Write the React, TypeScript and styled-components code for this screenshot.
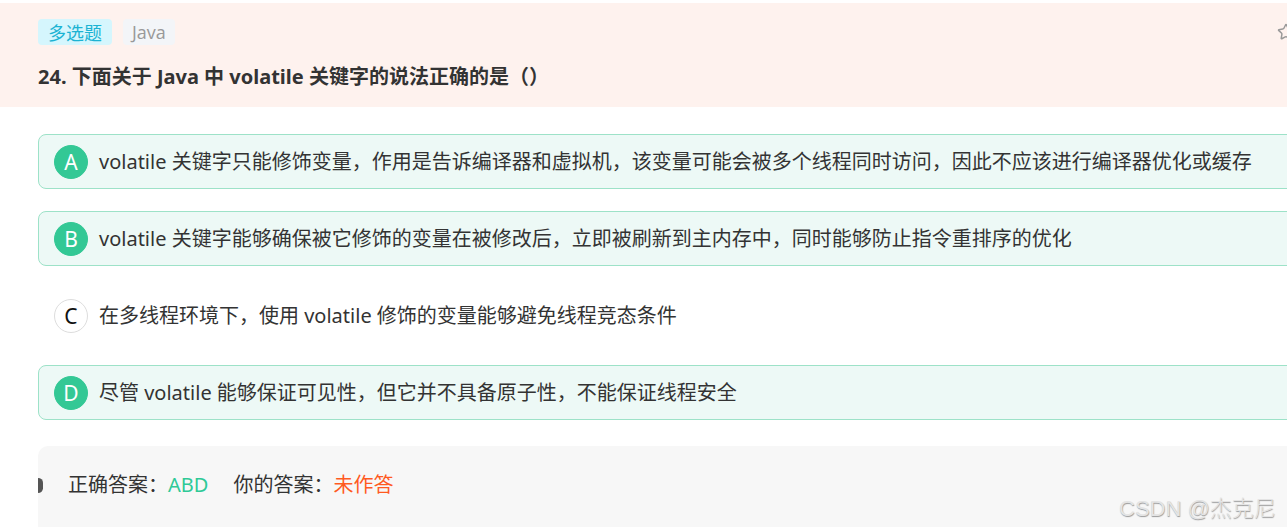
import React from 'react';
import styled, {createGlobalStyle} from "styled-components";
import {Star} from "lucide-react";

const GlobalStyle = createGlobalStyle`
  html, body {
    margin: 0;
    padding: 0;
    background: #fff;
    overflow: hidden;
  }
  body {
    font-family: "Noto Sans", "Noto Sans CJK SC", sans-serif;
    color: #333;
  }
`;

const Page = styled.div`
  position: relative;
  width: 1315px;
  height: 527px;
  padding-top: 3px;
  box-sizing: border-box;
  overflow: hidden;
`;

const Header = styled.div`
  background-color: #fef2ee;
  padding: 16px 20px 16px 38px;
`;

const TagRow = styled.div`
  display: flex;
  align-items: center;
  gap: 11px;
  height: 26px;
`;

const Tag = styled.span<{ $kind: 'type' | 'lang' }>`
  display: inline-flex;
  align-items: center;
  height: 26px;
  padding: 0 ${p => p.$kind === 'type' ? '10px' : '9px'};
  border-radius: 4px;
  font-family: "Open Sans", "Noto Sans CJK SC", sans-serif;
  font-size: 18px;
  background-color: ${p => p.$kind === 'type' ? '#d5f6fd' : '#f3f5f8'};
  color: ${p => p.$kind === 'type' ? '#1cb3d3' : '#999'};
`;

const StarWrap = styled.span`
  margin-left: auto;
  display: flex;
  color: #999;
`;

const Title = styled.div`
  margin-top: 18px;
  font-size: 20px;
  line-height: 28px;
  font-weight: bold;
  color: #333;
`;

const Options = styled.div`
  display: flex;
  flex-direction: column;
  gap: 22px;
  padding: 27px 0 0 38px;
`;

const Option = styled.div<{ $picked: boolean }>`
  display: flex;
  align-items: center;
  gap: 11px;
  height: 55px;
  box-sizing: border-box;
  padding: 0 15px;
  border: 1px solid ${p => p.$picked ? '#9de2c8' : 'transparent'};
  border-radius: 8px;
  background-color: ${p => p.$picked ? '#edf9f6' : 'transparent'};
`;

const Letter = styled.span<{ $picked: boolean }>`
  flex: none;
  display: flex;
  align-items: center;
  justify-content: center;
  width: 34px;
  height: 34px;
  box-sizing: border-box;
  border-radius: 50%;
  font-size: 21px;
  background-color: ${p => p.$picked ? '#33c895' : '#fff'};
  border: 1px solid ${p => p.$picked ? '#33c895' : '#ddd'};
  color: ${p => p.$picked ? '#fff' : '#111'};
`;

const OptionText = styled.span`
  font-size: 20px;
  line-height: 28px;
  color: #333;
  white-space: nowrap;
`;

const AnswerBox = styled.div`
  margin: 26px 0 0 38px;
  padding: 25px 0 50px 0;
  background-color: #f7f7f7;
  border-radius: 10px 0 0 0;
  display: flex;
  align-items: center;
  font-size: 20px;
  line-height: 28px;
`;

const Marker = styled.span`
  width: 5px;
  height: 15px;
  background-color: #555;
  border-radius: 0 8px 8px 0 / 0 50% 50% 0;
  margin-right: 25px;
`;

const Label = styled.span`
  color: #333;
`;

const Value = styled.span<{ $tone: 'ok' | 'none' }>`
  color: ${p => p.$tone === 'ok' ? '#2fc997' : '#ff5a1f'};
  margin-right: ${p => p.$tone === 'ok' ? '25px' : '0'};
`;

const Watermark = styled.div`
  position: absolute;
  left: 1119px;
  top: 490px;
  font-family: "Liberation Sans", "Noto Sans CJK SC", sans-serif;
  font-size: 22px;
  font-weight: 300;
  color: #e4e4e4;
  text-shadow: 0.5px 0.5px 1px #999;
  white-space: nowrap;
`;

const options = [
    {key: 'A', text: 'volatile 关键字只能修饰变量，作用是告诉编译器和虚拟机，该变量可能会被多个线程同时访问，因此不应该进行编译器优化或缓存', picked: true},
    {key: 'B', text: 'volatile 关键字能够确保被它修饰的变量在被修改后，立即被刷新到主内存中，同时能够防止指令重排序的优化', picked: true},
    {key: 'C', text: '在多线程环境下，使用 volatile 修饰的变量能够避免线程竞态条件', picked: false},
    {key: 'D', text: '尽管 volatile 能够保证可见性，但它并不具备原子性，不能保证线程安全', picked: true},
];

export default function App() {
    return (
        <Page>
            <GlobalStyle/>
            <Header>
                <TagRow>
                    <Tag $kind="type">多选题</Tag>
                    <Tag $kind="lang">Java</Tag>
                    <StarWrap><Star size={18} strokeWidth={2}/></StarWrap>
                </TagRow>
                <Title>24. 下面关于 Java 中 volatile 关键字的说法正确的是（）</Title>
            </Header>
            <Options>
                {options.map(o => (
                    <Option key={o.key} $picked={o.picked}>
                        <Letter $picked={o.picked}>{o.key}</Letter>
                        <OptionText>{o.text}</OptionText>
                    </Option>
                ))}
            </Options>
            <AnswerBox>
                <Marker/>
                <Label>正确答案：</Label>
                <Value $tone="ok">ABD</Value>
                <Label>你的答案：</Label>
                <Value $tone="none">未作答</Value>
            </AnswerBox>
            <Watermark>CSDN @杰克尼</Watermark>
        </Page>
    );
}
